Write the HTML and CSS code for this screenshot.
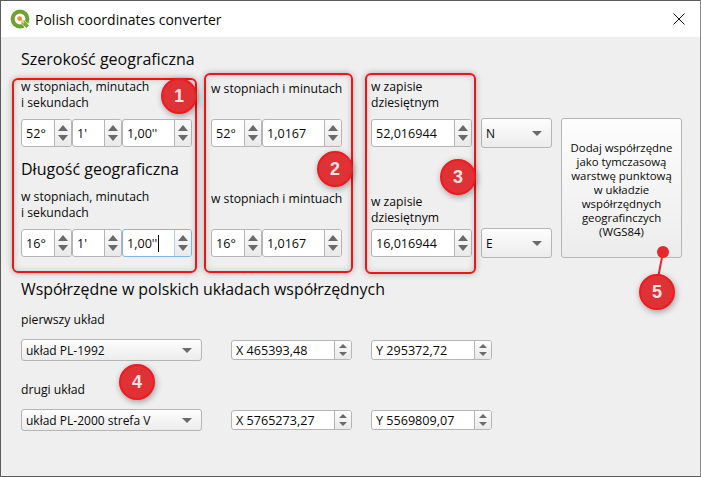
FILE: index.html
```html
<!DOCTYPE html>
<html lang="pl">
<head>
    <meta charset="UTF-8">
    <meta name="viewport" content="width=device-width, initial-scale=1.0">
    <title>Polish coordinates converter</title>
    <link rel="stylesheet" href="styles.css">
</head>
<body>
    <div class="window">
        <div class="titlebar">
            <svg class="app-icon" width="22" height="22" viewBox="0 0 22 22">
                <circle cx="10" cy="10" r="7.4" fill="none" stroke="#6ea12f" stroke-width="4"/>
                <path d="M12 12 L18 18" stroke="#ffffff" stroke-width="5"/>
                <path d="M14 11 L19 16.5 L16.5 19 L11 14 Z" fill="#7aa83a"/>
                <path d="M10 10 L14 14" stroke="#f2d16b" stroke-width="2"/>
                <circle cx="9.6" cy="9.6" r="2.4" fill="#ee8a3a"/>
            </svg>
            <span class="title">Polish coordinates converter</span>
            <svg class="close" width="12" height="12" viewBox="0 0 12 12">
                <path d="M0.5 0.5 L11.5 11.5 M11.5 0.5 L0.5 11.5" stroke="#111" stroke-width="1" fill="none"/>
            </svg>
        </div>

        <div class="content">
            <div class="top-grid">
                <h2 class="heading first">Szerokość geograficzna</h2>

                <div class="label">w stopniach, minutach<br>i sekundach</div>
                <div class="label single">w stopniach i minutach</div>
                <div class="label">w zapisie<br>dziesiętnym</div>
                <div></div>
                <button class="add-btn" type="button">Dodaj współrzędne<br>jako tymczasową<br>warstwę punktową<br>w układzie<br>współrzędnych<br>geografinczych<br>(WGS84)</button>

                <div class="spin-row">
                    <div class="spin w-deg"><div class="val">52°</div><div class="btns"><i class="up"></i><i class="down"></i></div></div>
                    <div class="spin w-min"><div class="val">1'</div><div class="btns"><i class="up"></i><i class="down"></i></div></div>
                    <div class="spin grow"><div class="val">1,00''</div><div class="btns"><i class="up"></i><i class="down"></i></div></div>
                </div>
                <div class="spin-row col-2">
                    <div class="spin w-deg"><div class="val">52°</div><div class="btns"><i class="up"></i><i class="down"></i></div></div>
                    <div class="spin grow"><div class="val">1,0167</div><div class="btns"><i class="up"></i><i class="down"></i></div></div>
                </div>
                <div class="spin-row col-3">
                    <div class="spin grow"><div class="val">52,016944</div><div class="btns"><i class="up"></i><i class="down"></i></div></div>
                </div>
                <div class="combo tall"><span>N</span><i class="arrow"></i></div>

                <h2 class="heading second">Długość geograficzna</h2>

                <div class="label">w stopniach, minutach<br>i sekundach</div>
                <div class="label single">w stopniach i mintuach</div>
                <div class="label low">w zapisie<br>dziesiętnym</div>
                <div></div>

                <div class="spin-row">
                    <div class="spin w-deg"><div class="val">16°</div><div class="btns"><i class="up"></i><i class="down"></i></div></div>
                    <div class="spin w-min"><div class="val">1'</div><div class="btns"><i class="up"></i><i class="down"></i></div></div>
                    <div class="spin grow focused"><div class="val">1,00''<span class="caret"></span></div><div class="btns"><i class="up"></i><i class="down"></i></div></div>
                </div>
                <div class="spin-row col-2">
                    <div class="spin w-deg"><div class="val">16°</div><div class="btns"><i class="up"></i><i class="down"></i></div></div>
                    <div class="spin grow"><div class="val">1,0167</div><div class="btns"><i class="up"></i><i class="down"></i></div></div>
                </div>
                <div class="spin-row col-3">
                    <div class="spin grow"><div class="val">16,016944</div><div class="btns"><i class="up"></i><i class="down"></i></div></div>
                </div>
                <div class="combo tall"><span>E</span><i class="arrow"></i></div>
            </div>

            <h2 class="heading section">Współrzędne w polskich układach współrzędnych</h2>

            <div class="label plain">pierwszy układ</div>
            <div class="system-row">
                <div class="combo wide"><span>układ PL-1992</span><i class="arrow"></i></div>
                <div class="spin small"><div class="val">X 465393,48</div><div class="btns"><i class="up"></i><i class="down"></i></div></div>
                <div class="spin small"><div class="val">Y 295372,72</div><div class="btns"><i class="up"></i><i class="down"></i></div></div>
            </div>

            <div class="label plain next">drugi układ</div>
            <div class="system-row">
                <div class="combo wide"><span>układ PL-2000 strefa V</span><i class="arrow"></i></div>
                <div class="spin small"><div class="val">X 5765273,27</div><div class="btns"><i class="up"></i><i class="down"></i></div></div>
                <div class="spin small"><div class="val">Y 5569809,07</div><div class="btns"><i class="up"></i><i class="down"></i></div></div>
            </div>
        </div>
    </div>

    <!-- annotations drawn on top of the screenshot -->
    <div class="mark box-1"></div>
    <div class="mark box-2"></div>
    <div class="mark box-3"></div>
    <svg class="pointer" width="24" height="40" viewBox="0 0 24 40">
        <circle cx="13" cy="8" r="6" fill="#e8262b"/>
        <path d="M13 8 L8 34" stroke="#e8262b" stroke-width="2"/>
    </svg>
    <div class="badge badge-1">1</div>
    <div class="badge badge-2">2</div>
    <div class="badge badge-3">3</div>
    <div class="badge badge-4">4</div>
    <div class="badge badge-5">5</div>
</body>
</html>
```

FILE: styles.css
```css
* {
    box-sizing: border-box;
}

body {
    position: relative;
    margin: 0;
    width: 701px;
    height: 477px;
    overflow: hidden;
    font-family: "Open Sans", "Noto Sans", sans-serif;
    font-size: 12.2px;
    color: #0a0a0a;
}

.window {
    width: 701px;
    height: 477px;
    background: #efefef;
    border: 1px solid #5c5c5c;
    border-right-color: #8a8a8a;
}

.titlebar {
    display: flex;
    align-items: center;
    height: 36px;
    padding: 0 15px 0 9px;
    background: #fff;
}

.app-icon {
    flex: none;
    margin-right: 3px;
    margin-top: 1px;
}

.title {
    flex: 1;
    font-size: 14px;
    margin-top: 1px;
}

.content {
    padding: 11px 0 0 20px;
}

.top-grid {
    display: grid;
    grid-template-columns: 190px 160px 110px 80px 121px;
    grid-template-rows: 31px 40px 28px 42px 40px 28px;
}

.heading {
    margin: 0;
    font-size: 16px;
    font-weight: 400;
    line-height: 22px;
}

.heading.first {
    grid-column: 1 / 6;
}

.heading.second {
    grid-column: 1 / 5;
    padding-top: 11px;
}

.heading.section {
    margin-top: 21px;
    font-size: 15.9px;
}

.label {
    line-height: 16px;
}

.label.single {
    padding-top: 2px;
}

.label.low {
    margin-top: 5px;
}

.label.plain {
    margin-top: 12px;
}

.label.plain.next {
    margin-top: 21px;
}

.spin-row {
    display: flex;
    width: 171px;
}

.spin-row.col-2 {
    width: 131px;
}

.spin-row.col-3 {
    width: 101px;
}

.spin {
    display: flex;
    height: 28px;
    background: #fff;
    border: 1px solid #b5b5b5;
    border-radius: 3px;
}

.w-deg {
    width: 51px;
}

.w-min {
    width: 50px;
}

.grow {
    flex: 1;
}

.val {
    flex: 1;
    display: flex;
    align-items: center;
    padding-left: 4px;
    font-size: 12.6px;
    white-space: nowrap;
    overflow: hidden;
}

.caret {
    width: 1px;
    height: 17px;
    margin-left: 1px;
    background: #000;
}

.btns {
    flex: none;
    display: flex;
    flex-direction: column;
    align-items: center;
    justify-content: space-between;
    width: 17px;
    padding: 5px 0;
    border-left: 1px solid #b5b5b5;
    border-radius: 0 2px 2px 0;
    background: linear-gradient(#fbfbfb, #e9e9e9);
}

.up,
.down {
    display: block;
    width: 0;
    height: 0;
    border-left: 5.5px solid transparent;
    border-right: 5.5px solid transparent;
}

.up {
    border-bottom: 6px solid #6a6a6a;
}

.down {
    border-top: 6px solid #6a6a6a;
}

.focused {
    border-color: #7fb8e6;
}

.focused .btns {
    border-left-color: #b5cfe4;
}

.combo {
    display: flex;
    align-items: center;
    justify-content: space-between;
    padding: 0 9px 0 4px;
    font-size: 12px;
    border: 1px solid #b5b5b5;
    border-radius: 3px;
    background: linear-gradient(#fdfdfd, #ececec);
}

.combo.tall {
    width: 71px;
    height: 30px;
    margin-top: -1px;
}

.combo.wide {
    width: 181px;
    height: 22px;
}

.arrow {
    display: block;
    width: 0;
    height: 0;
    border-left: 5px solid transparent;
    border-right: 5px solid transparent;
    border-top: 5px solid #6a6a6a;
}

.add-btn {
    grid-column: 5;
    grid-row: 2 / 7;
    align-self: end;
    height: 140px;
    margin-bottom: -1px;
    padding: 4px 0 0;
    font: inherit;
    font-size: 11.4px;
    line-height: 14px;
    color: inherit;
    text-align: center;
    border: 1px solid #b5b5b5;
    border-radius: 3px;
    background: linear-gradient(#fdfdfd, #ececec);
}

.system-row {
    display: flex;
    align-items: center;
    margin-top: 11px;
    height: 22px;
}

.spin.small {
    width: 121px;
    height: 20px;
}

.spin.small:nth-child(2) {
    margin-left: 29px;
}

.spin.small:nth-child(3) {
    margin-left: 19px;
}

.small .btns {
    padding: 3px 0;
}

.small .up,
.small .down {
    border-left-width: 4px;
    border-right-width: 4px;
}

.small .up {
    border-bottom-width: 4px;
}

.small .down {
    border-top-width: 4px;
}

/* annotations */
.mark {
    position: absolute;
    border: 2px solid #f11414;
    border-radius: 6px;
    box-shadow: 0 0 6px rgba(0, 0, 0, 0.28), inset 0 0 6px rgba(0, 0, 0, 0.16);
}

.box-1 {
    left: 12px;
    top: 78px;
    width: 185px;
    height: 195px;
}

.box-2 {
    left: 204px;
    top: 73px;
    width: 149px;
    height: 200px;
}

.box-3 {
    left: 365px;
    top: 73px;
    width: 111px;
    height: 201px;
}

.pointer {
    position: absolute;
    left: 650px;
    top: 244px;
}

.badge {
    position: absolute;
    width: 36px;
    height: 36px;
    border: 2px solid #f01a1f;
    border-radius: 50%;
    background: #de3236;
    box-shadow: 1px 2px 6px rgba(0, 0, 0, 0.35);
    color: #fbe3e3;
    font-family: "Liberation Sans", sans-serif;
    font-size: 18px;
    font-weight: 700;
    line-height: 32px;
    text-align: center;
}

.badge-1 {
    left: 161px;
    top: 78px;
}

.badge-2 {
    left: 317px;
    top: 151px;
}

.badge-3 {
    left: 440px;
    top: 159px;
}

.badge-4 {
    left: 119px;
    top: 364px;
}

.badge-5 {
    left: 639px;
    top: 274px;
}
```
